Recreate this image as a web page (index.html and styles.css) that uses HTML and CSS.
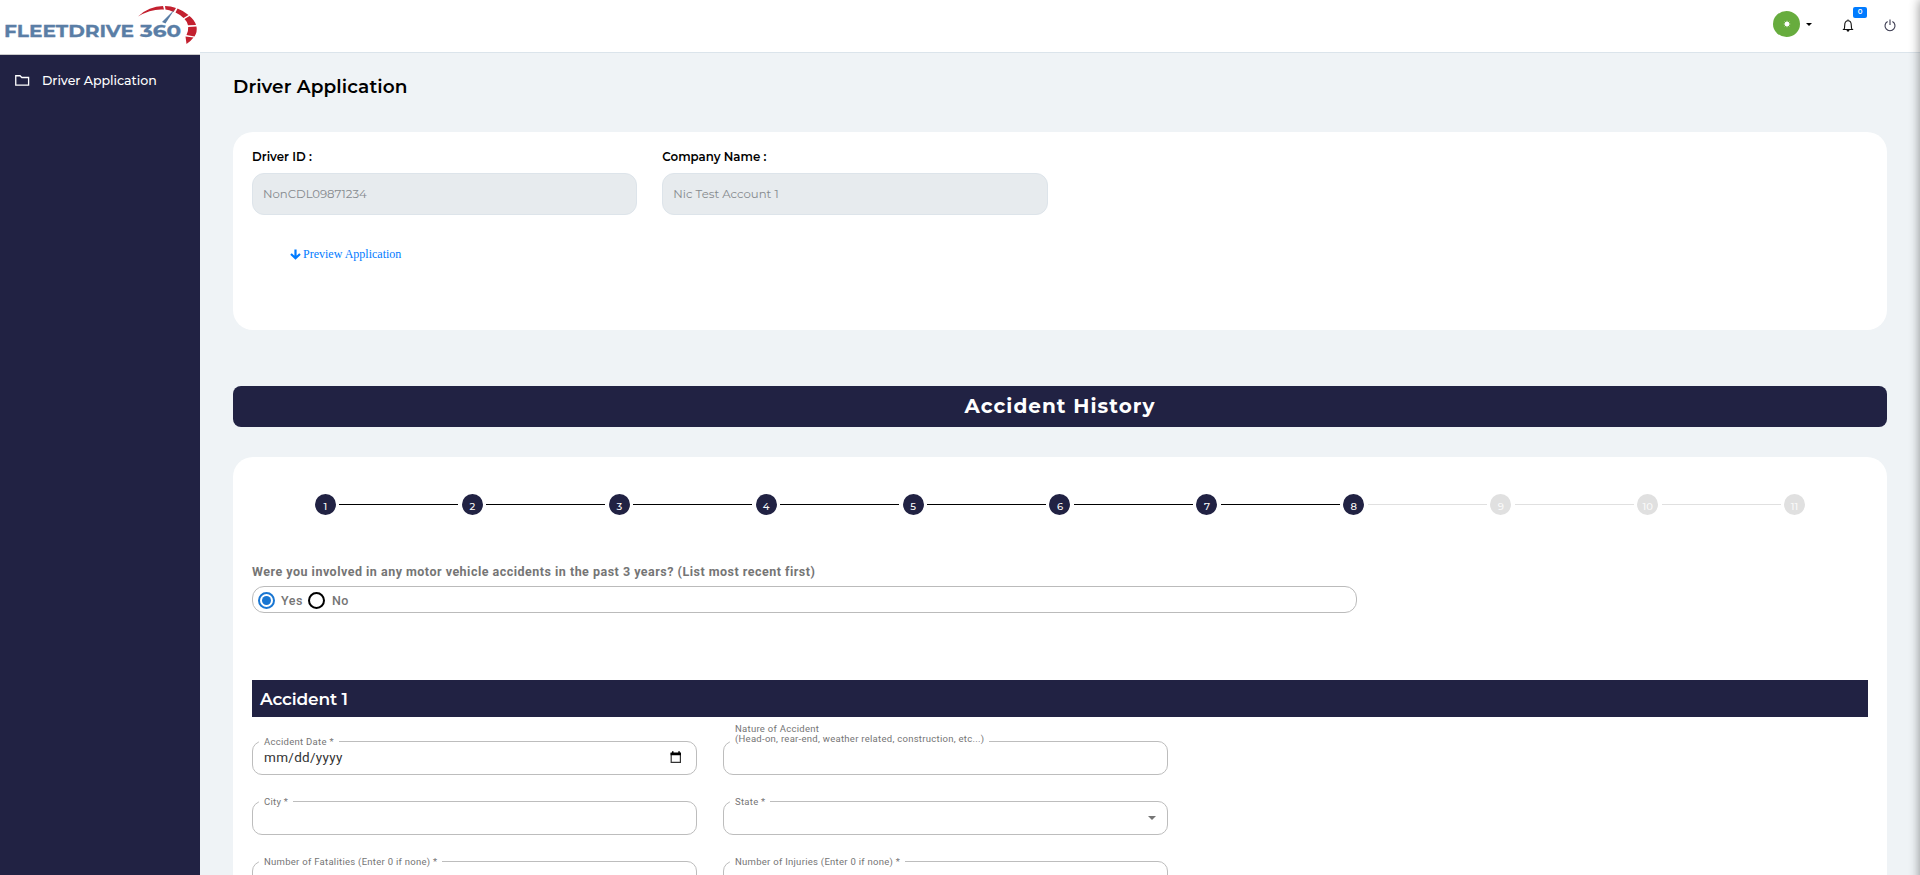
FILE: index.html
```html
<!DOCTYPE html>
<html lang="en">
<head>
<meta charset="utf-8">
<title>Driver Application</title>
<link rel="stylesheet" href="styles.css">
</head>
<body>
<div class="app">
  <aside class="sidebar">
    <div class="logo">
      <svg width="200" height="54" viewBox="0 0 200 54" role="img" aria-label="Fleetdrive 360">
        <g class="logo-text">
          <text x="4" y="36.6" textLength="130" lengthAdjust="spacingAndGlyphs">FLEETDRIVE</text>
          <text x="140" y="36.6" textLength="41" lengthAdjust="spacingAndGlyphs">360</text>
        </g>
        <path class="logo-red" d="M138 16.5Q149 6 163 6L164 9.5Q151 8.500 138 16.500ZM165 6Q171 6 176 8L173.500 12Q169 10 165.500 9.600ZM177.500 8.500Q184 11 188.500 15L183.500 18Q180 14.500 175.500 12.500ZM189.500 16Q194.500 20 196 25L188 25.300Q187.500 22 184.500 19ZM196.500 26.500Q197.500 32 194.500 36.500L186.500 35Q188.500 31 188.200 27ZM193.500 37.500Q190.500 41.500 186.500 44L185.500 36.500Z"/>
        <path class="logo-needle" d="M174.500 9.500L162 22L165.500 23.500Z"/>
      </svg>
    </div>
    <nav class="nav">
      <a class="nav-item">
        <svg width="15" height="11" viewBox="0 0 15 11"><path d="M.75 .75H5L6.800 2.500H13.600V10.200H.75Z" fill="none" stroke="#fff" stroke-width="1.300"/></svg>
        <span>Driver Application</span>
      </a>
    </nav>
  </aside>
  <div class="page">
    <header class="topbar">
      <span class="avatar"><svg width="8" height="8" viewBox="0 0 8 8"><circle cx="4" cy="4" r="2.200" fill="#fff"/><path d="M4 .8V7.200M.8 4H7.200M1.700 1.700L6.300 6.300M6.300 1.700L1.700 6.300" stroke="#fff" stroke-width=".8"/></svg></span>
      <span class="caret"></span>
      <span class="bell">
        <svg width="12" height="14" viewBox="0 0 12 14"><path d="M.8 10.500H11.200M2 10.300Q2.700 9 2.700 6.500Q2.700 1.800 6 1.800Q9.300 1.800 9.300 6.500Q9.300 9 10 10.300M6 .5V1.800" fill="none" stroke="#111" stroke-width="1.100"/><path d="M4.500 11H7.500Q7.300 12.800 6 12.800Q4.700 12.800 4.500 11Z" fill="#111"/></svg>
        <span class="badge">0</span>
      </span>
      <svg class="power" width="12" height="13" viewBox="0 0 12 13"><path d="M3.600 2.400A5 5 0 1 0 8.400 2.400M6 .5V6" fill="none" stroke="#3b3b50" stroke-width="1.100"/></svg>
    </header>
    <main class="content">
      <h1 class="title">Driver Application</h1>
      <section class="card info">
        <div class="info-row">
          <div class="info-field"><span class="info-label">Driver ID :</span><div class="info-input">NonCDL09871234</div></div>
          <div class="info-field"><span class="info-label">Company Name :</span><div class="info-input">Nic Test Account 1</div></div>
        </div>
        <a class="preview"><svg width="11" height="11" viewBox="0 0 11 11"><path d="M5.500 .5V9M1 5L5.500 9.300L10 5" fill="none" stroke="#007bff" stroke-width="2.200"/></svg><span>Preview Application</span></a>
      </section>
      <h2 class="banner"><span>Accident History</span></h2>
      <section class="card form">
        <ol class="steps">
          <li class="step done">1</li><li class="step done">2</li><li class="step done">3</li><li class="step done">4</li><li class="step done">5</li><li class="step done">6</li><li class="step done">7</li><li class="step done last-done">8</li><li class="step">9</li><li class="step">10</li><li class="step">11</li>
        </ol>
        <p class="question">Were you involved in any motor vehicle accidents in the past 3 years? (List most recent first)</p>
        <div class="radios">
          <span class="radio checked"></span><span class="radio-text">Yes</span>
          <span class="radio"></span><span class="radio-text second">No</span>
        </div>
        <h3 class="subhead"><span>Accident 1</span></h3>
        <div class="fields">
          <div class="field"><span class="field-label">Accident Date *</span><span class="field-value">mm/dd/yyyy</span>
            <svg class="cal" width="12" height="13" viewBox="0 0 12 13"><path d="M1.200 2.500H10.400V11.300H1.200Z" fill="none" stroke="#333" stroke-width="1.200"/><path d="M.6 1.500H11V4.200H.6ZM2 .3H3.500V2H2ZM8.300 .3H9.800V2H8.300Z" fill="#000"/></svg></div>
          <div class="field"><span class="field-label two-line">Nature of Accident<br>(Head-on, rear-end, weather related, construction, etc...)</span></div>
          <div class="field"><span class="field-label">City *</span></div>
          <div class="field"><span class="field-label">State *</span><span class="arrow"></span></div>
          <div class="field"><span class="field-label">Number of Fatalities (Enter 0 if none) *</span></div>
          <div class="field"><span class="field-label">Number of Injuries (Enter 0 if none) *</span></div>
        </div>
      </section>
    </main>
  </div>
  <div class="edge-shadow"></div>
</div>
</body>
</html>
```

FILE: styles.css
```css
* { box-sizing: border-box; }
body { margin: 0; font-family: Montserrat, Inter, sans-serif; background: #eff3f6; color: #000; }
.app { display: flex; height: 875px; overflow: hidden; position: relative; }

.sidebar { width: 200px; flex: none; background: #212243; }
.logo { height: 55px; background: #fff; border-bottom: 1px solid #ccc; }
.logo svg { display: block; }
.logo-text { font: 700 16.500px Montserrat, Inter, sans-serif; fill: #5a7ea6; stroke: #5a7ea6; stroke-width: .3px; }
.logo-red { fill: #c3202f; }
.logo-needle { fill: #5a7ea6; }
.nav { padding-top: 13px; }
.nav-item { display: flex; align-items: center; height: 24px; padding-left: 15px; gap: 12px; color: #fff; font-size: 12.600px; font-weight: 500; white-space: nowrap; letter-spacing: -.05px; }

.page { flex: 1; min-width: 0; }
.topbar { height: 53px; background: #fff; border-bottom: 1px solid #dbe4eb; display: flex; justify-content: flex-end; padding-right: 24px; }
.avatar { width: 27px; height: 26px; border-radius: 50%; background: #67ac3e; margin-top: 11px; display: flex; align-items: center; justify-content: center; }
.caret { border: 3.500px solid transparent; border-top-color: #000; border-bottom: 0; height: 0; margin: 23px 0 0 6px; }
.bell { position: relative; margin: 19px 0 0 30px; }
.bell svg { display: block; }
.badge { position: absolute; left: 11px; top: -12px; width: 14px; height: 11px; border-radius: 2px; background: #007bff; color: #fff; font-size: 7px; font-weight: 600; line-height: 10px; text-align: center; }
.power { margin: 19px 0 0 30px; }

.content { padding: 0 33px; }
.title { margin: 0; height: 79px; padding-top: 22px; font-size: 18.500px; font-weight: 600; line-height: 24px; letter-spacing: .1px; }
.card { background: #fff; border-radius: 20px; padding: 0 19px; }
.info { height: 198px; padding-top: 17px; }
.info-row { display: flex; gap: 25px; }
.info-field { width: 385.300px; }
.info-label { display: block; height: 24px; line-height: 17px; font-size: 11.800px; font-weight: 600; }
.info-input { height: 42px; border: 1px solid #dde4ea; border-radius: 12px; background: #e7ebee; color: #85898d; font-size: 11.700px; line-height: 40px; padding-left: 10px; }
.preview { display: flex; align-items: center; gap: 2px; margin: 30px 0 0 38px; height: 18px; color: #007bff; font: 12px "Liberation Serif", serif; }

.banner { margin: 56px 0 30px; height: 41px; border-radius: 8px; background: #212243; color: #fff; font-size: 20px; font-weight: 700; letter-spacing: 1.050px; line-height: 40px; text-align: center; }
.form { height: 450px; padding-top: 37px; }
.steps { list-style: none; margin: 0; padding: 0; display: grid; grid-template-columns: repeat(11, 1fr); height: 72px; }
.step { display: flex; align-items: flex-start; position: relative; justify-content: center; color: #fafafa; font-size: 10px; font-weight: 500; line-height: 25px; isolation: isolate; }
.step::before { content: ""; position: absolute; z-index: -1; width: 21px; height: 21px; border-radius: 50%; background: #e0e0e0; left: calc(50% - 10.500px); top: 0; }
.step.done::before { background: #212243; }
.step:not(:last-child)::after { content: ""; position: absolute; left: calc(50% + 14px); width: calc(100% - 28px); top: 10px; height: 1px; background: #e0e0e0; }
.step.done:not(.last-done)::after { background: #000; }

.question { margin: 0; height: 20px; font: 700 12.500px/11px Roboto, sans-serif; letter-spacing: .49px; color: #757575; }
.radios { width: 1105px; height: 27px; border: 1px solid #bbb; border-radius: 12px; display: flex; align-items: center; padding: 2px 0 0 5px; font: 500 12.500px Roboto, sans-serif; letter-spacing: .5px; color: #757575; }
.radio { width: 17px; height: 17px; border: 2px solid #000; border-radius: 50%; display: grid; place-items: center; }
.radio.checked { border-color: #1976d2; }
.radio.checked::after { content: ""; width: 9px; height: 9px; border-radius: 50%; background: #1976d2; }
.radio-text { margin: 0 5px 0 6px; }
.radio-text.second { margin-left: 7px; }
.subhead { margin: 67px 0 24px; height: 37px; padding-left: 8px; background: #212243; color: #fff; font-size: 17px; font-weight: 600; line-height: 38px; letter-spacing: -.15px; }

.fields { display: grid; grid-template-columns: 445px 445px; column-gap: 26px; row-gap: 26px; }
.field { position: relative; height: 34px; border: 1px solid #bdbdbd; border-radius: 10px; display: flex; align-items: center; padding: 0 14px 2px 11px; font-family: Roboto, sans-serif; }
.field-label { position: absolute; left: 6px; top: -7px; padding: 0 5px; background: #fff; color: #757575; font-size: 9.500px; line-height: 13px; letter-spacing: .28px; white-space: nowrap; }
.two-line { top: -18px; line-height: 10px; }
.field-value { font-size: 13.500px; color: #333; letter-spacing: .3px; }
.cal { margin-left: auto; }
.arrow { margin: 2px -3px 0 auto; border: 4.500px solid transparent; border-top-color: #757575; border-bottom: 0; }
.edge-shadow { position: absolute; right: -10px; top: 0; bottom: -20px; width: 10px; box-shadow: 0 0 11px rgba(0, 0, 0, .45); }
```
